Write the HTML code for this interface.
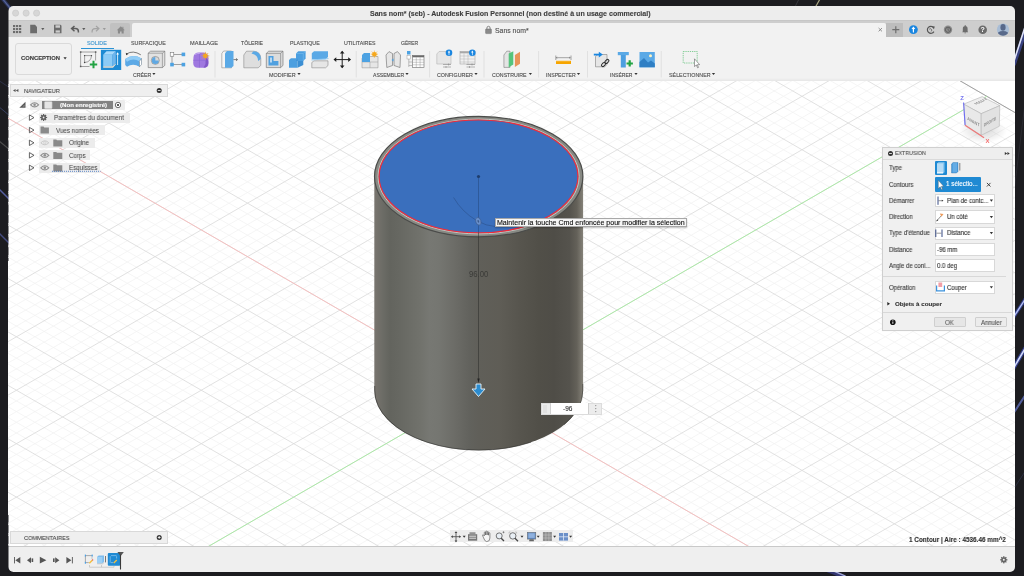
<!DOCTYPE html>
<html><head><meta charset="utf-8">
<style>
*{margin:0;padding:0;box-sizing:border-box}
html,body{width:1024px;height:576px;overflow:hidden;background:#1c1c20;font-family:"Liberation Sans",sans-serif;position:relative}
.a{position:absolute}
svg{will-change:transform}
.t{position:absolute;white-space:nowrap;line-height:1;will-change:transform;-webkit-text-stroke:0.12px currentColor}
#win{position:absolute;left:0;top:0;width:1024px;height:576px;clip-path:inset(6px 9px 4px 8.5px round 5px 5px 5px 5px)}
</style></head><body>
<!-- desktop streaks -->
<svg class="a" style="left:0;top:0" width="1024" height="576">
<g stroke-linecap="round" fill="none">
<path d="M1 -3 L10 8" stroke="#3a4a8a" stroke-width="3.5" opacity="0.55"/><path d="M1 -3 L10 8" stroke="#7080c0" stroke-width="1.2" opacity="0.6"/>
<path d="M-2 80 L10 88" stroke="#3a3f60" stroke-width="1" opacity="0.6"/>
<path d="M-2 106 L10 116" stroke="#46507a" stroke-width="1" opacity="0.7"/>
<path d="M-2 140 L10 150" stroke="#6a6a6a" stroke-width="1.2" opacity="0.6"/>
<path d="M-2 188 L10 200" stroke="#6470c0" stroke-width="1.5" opacity="0.8"/>
<path d="M-2 232 L10 244" stroke="#5560a8" stroke-width="1.4" opacity="0.7"/>
<path d="M1027 26 L1014 64" stroke="#5060d0" stroke-width="4" opacity="0.55"/>
<path d="M1026 24 L1013 64" stroke="#e8ecff" stroke-width="1.6" opacity="0.95"/>
<path d="M1026 298 L1013 318" stroke="#4050c0" stroke-width="3.5" opacity="0.6"/><path d="M1026 298 L1013 318" stroke="#c0ccff" stroke-width="1.4" opacity="0.9"/>
<path d="M1026 347 L1013 369" stroke="#4050c0" stroke-width="4" opacity="0.65"/><path d="M1026 347 L1013 369" stroke="#d8e0ff" stroke-width="1.6" opacity="0.95"/>
<path d="M1026 394 L1013 414" stroke="#6a7ad0" stroke-width="2" opacity="0.7"/>
<path d="M1026 470 L1013 490" stroke="#3a3f60" stroke-width="1" opacity="0.5"/>
<path d="M820 -1 L815.5 7" stroke="#c9c69a" stroke-width="1.2" opacity="0.8"/>
<path d="M799 -1 L795 7" stroke="#55555a" stroke-width="0.8" opacity="0.6"/>
<path d="M845 576 L829 569" stroke="#b8c0f8" stroke-width="1.6" opacity="0.85"/>
<path d="M843 577 L825 570" stroke="#4a4fc0" stroke-width="2.5" opacity="0.5"/>
<path d="M1026 95 L1013 200" stroke="#3a3a44" stroke-width="0.8" opacity="0.6"/>
</g>

</svg>
<div id="win">
  <div class="a" style="left:0;top:0;width:1024px;height:20px;background:#ededed"></div>
  <div class="a" style="left:0;top:20px;width:1024px;height:17px;background:#cecece;border-top:1px solid #c7c7c7"></div>
  <div class="a" style="left:132.1px;top:22.9px;width:754.1px;height:14.5px;background:#f2f2f2;border-radius:2px 2px 0 0"></div>
  <div class="a" style="left:109.8px;top:22.6px;width:20.2px;height:14.4px;background:#c1c1c1;border-radius:2px 2px 0 0"></div>
  <div class="a" style="left:886.2px;top:22.8px;width:16.5px;height:14.5px;background:#bdbdbd"></div>
  <div class="a" style="left:0;top:37px;width:1024px;height:44px;background:linear-gradient(#f2f2f2 0,#f2f2f2 41px,#e6e6e6 44px)"></div>
  <div class="a" style="left:0;top:81px;width:1024px;height:465px;background:#fff;overflow:hidden">
    <svg class="a" style="left:0;top:-81px" width="1024" height="576">
<path d="M0 744.11L1024 1336.22M0 733.42L1024 1325.53M0 722.73L1024 1314.84M0 712.05L1024 1304.15M0 690.67L1024 1282.78M0 679.98L1024 1272.09M0 669.29L1024 1261.40M0 658.61L1024 1250.71M0 637.23L1024 1229.34M0 626.54L1024 1218.65M0 615.85L1024 1207.96M0 605.17L1024 1197.27M0 583.79L1024 1175.90M0 573.10L1024 1165.21M0 562.41L1024 1154.52M0 551.73L1024 1143.83M0 530.35L1024 1122.46M0 519.66L1024 1111.77M0 508.97L1024 1101.08M0 498.29L1024 1090.39M0 476.91L1024 1069.02M0 466.22L1024 1058.33M0 455.53L1024 1047.64M0 444.85L1024 1036.95M0 423.47L1024 1015.58M0 412.78L1024 1004.89M0 402.09L1024 994.20M0 391.41L1024 983.51M0 370.03L1024 962.14M0 359.34L1024 951.45M0 348.65L1024 940.76M0 337.97L1024 930.07M0 316.59L1024 908.70M0 305.90L1024 898.01M0 295.21L1024 887.32M0 284.53L1024 876.63M0 263.15L1024 855.26M0 252.46L1024 844.57M0 241.77L1024 833.88M0 231.09L1024 823.19M0 209.71L1024 801.82M0 199.02L1024 791.13M0 188.33L1024 780.44M0 177.65L1024 769.75M0 156.27L1024 748.38M0 145.58L1024 737.69M0 134.89L1024 727.00M0 124.21L1024 716.31M0 102.83L1024 694.94M0 92.14L1024 684.25M0 81.45L1024 673.56M0 70.77L1024 662.87M0 49.39L1024 641.50M0 38.70L1024 630.81M0 28.01L1024 620.12M0 17.33L1024 609.43M0 -4.05L1024 588.06M0 -14.74L1024 577.37M0 -25.43L1024 566.68M0 -36.11L1024 555.99M0 -57.49L1024 534.62M0 -68.18L1024 523.93M0 -78.87L1024 513.24M0 -89.55L1024 502.55M0 -110.93L1024 481.18M0 -121.62L1024 470.49M0 -132.31L1024 459.80M0 -142.99L1024 449.11M0 -164.37L1024 427.74M0 -175.06L1024 417.05M0 -185.75L1024 406.36M0 -196.43L1024 395.67M0 -217.81L1024 374.30M0 -228.50L1024 363.61M0 -239.19L1024 352.92M0 -249.87L1024 342.23M0 -271.25L1024 320.86M0 -281.94L1024 310.17M0 -292.63L1024 299.48M0 -303.31L1024 288.79M0 -324.69L1024 267.42M0 -335.38L1024 256.73M0 -346.07L1024 246.04M0 -356.75L1024 235.35M0 -378.13L1024 213.98M0 -388.82L1024 203.29M0 -399.51L1024 192.60M0 -410.19L1024 181.91M0 -431.57L1024 160.54M0 -442.26L1024 149.85M0 -452.95L1024 139.16M0 -463.63L1024 128.47M0 36.35L441.58 -218.99M0 47.04L450.82 -213.64M0 57.73L460.07 -208.30M0 68.41L469.31 -202.95M0 89.79L487.79 -192.27M0 100.48L497.03 -186.92M0 111.17L506.28 -181.58M0 121.85L515.52 -176.23M0 143.23L534.00 -165.55M0 153.92L543.24 -160.20M0 164.61L552.49 -154.86M0 175.29L561.73 -149.51M0 196.67L580.21 -138.83M0 207.36L589.45 -133.48M0 218.05L598.70 -128.14M0 228.73L607.94 -122.79M0 250.11L626.42 -112.11M0 260.80L635.66 -106.76M0 271.49L644.91 -101.42M0 282.17L654.15 -96.07M0 303.55L672.63 -85.39M0 314.24L681.87 -80.04M0 324.93L691.12 -74.70M0 335.61L700.36 -69.35M0 356.99L718.84 -58.67M0 367.68L728.08 -53.32M0 378.37L737.33 -47.98M0 389.05L746.57 -42.63M0 410.43L765.05 -31.95M0 421.12L774.29 -26.60M0 431.81L783.54 -21.26M0 442.49L792.78 -15.91M0 463.87L811.26 -5.23M0 474.56L820.50 0.12M0 485.25L829.75 5.46M0 495.93L838.99 10.81M0 517.31L857.47 21.49M0 528.00L866.71 26.84M0 538.69L875.96 32.18M0 549.37L885.20 37.53M0 570.75L903.68 48.21M0 581.44L912.92 53.56M0 592.13L922.17 58.90M0 602.81L931.41 64.25M0 624.19L949.89 74.93M0 634.88L959.13 80.28M0 645.57L968.38 85.62M0 656.25L977.62 90.97M0 677.63L996.10 101.65M0 688.32L1005.34 107.00M0 699.01L1014.59 112.34M0 709.69L1023.83 117.69M0 731.07L1024.00 138.96M0 741.76L1024.00 149.65M0 752.45L1024.00 160.34M0 763.13L1024.00 171.03M0 784.51L1024.00 192.40M0 795.20L1024.00 203.09M0 805.89L1024.00 213.78M0 816.57L1024.00 224.47M0 837.95L1024.00 245.84M0 848.64L1024.00 256.53M0 859.33L1024.00 267.22M0 870.01L1024.00 277.91M0 891.39L1024.00 299.28M0 902.08L1024.00 309.97M0 912.77L1024.00 320.66M0 923.45L1024.00 331.35M0 944.83L1024.00 352.72M0 955.52L1024.00 363.41M0 966.21L1024.00 374.10M0 976.89L1024.00 384.79M0 998.27L1024.00 406.16M0 1008.96L1024.00 416.85M0 1019.65L1024.00 427.54M0 1030.33L1024.00 438.23M0 1051.71L1024.00 459.60M0 1062.40L1024.00 470.29M0 1073.09L1024.00 480.98M0 1083.77L1024.00 491.67M0 1105.15L1024.00 513.04M0 1115.84L1024.00 523.73M0 1126.53L1024.00 534.42M0 1137.21L1024.00 545.11M0 1158.59L1024.00 566.48M0 1169.28L1024.00 577.17M0 1179.97L1024.00 587.86M0 1190.65L1024.00 598.55M0 1212.03L1024.00 619.92M0 1222.72L1024.00 630.61M0 1233.41L1024.00 641.30M0 1244.09L1024.00 651.99M0 1265.47L1024.00 673.36M0 1276.16L1024.00 684.05M0 1286.85L1024.00 694.74M0 1297.53L1024.00 705.43" stroke="#f2f2f2" stroke-width="0.8" fill="none"/>
<path d="M0 754.80L1024 1346.91M0 701.36L1024 1293.47M0 647.92L1024 1240.03M0 594.48L1024 1186.59M0 541.04L1024 1133.15M0 487.60L1024 1079.71M0 434.16L1024 1026.27M0 380.72L1024 972.83M0 327.28L1024 919.39M0 273.84L1024 865.95M0 220.40L1024 812.51M0 166.96L1024 759.07M0 113.52L1024 705.63M0 60.08L1024 652.19M0 6.64L1024 598.75M0 -46.80L1024 545.31M0 -100.24L1024 491.87M0 -153.68L1024 438.43M0 -207.12L1024 384.99M0 -260.56L1024 331.55M0 -314.00L1024 278.11M0 -367.44L1024 224.67M0 -420.88L1024 171.23M0 -474.32L1024 117.79M0 25.66L432.34 -224.33M0 79.10L478.55 -197.61M0 132.54L524.76 -170.89M0 185.98L570.97 -144.17M0 239.42L617.18 -117.45M0 292.86L663.39 -90.73M0 346.30L709.60 -64.01M0 399.74L755.81 -37.29M0 453.18L802.02 -10.57M0 506.62L848.23 16.15M0 560.06L894.44 42.87M0 613.50L940.65 69.59M0 666.94L986.86 96.31M0 720.38L1024.00 128.27M0 773.82L1024.00 181.71M0 827.26L1024.00 235.15M0 880.70L1024.00 288.59M0 934.14L1024.00 342.03M0 987.58L1024.00 395.47M0 1041.02L1024.00 448.91M0 1094.46L1024.00 502.35M0 1147.90L1024.00 555.79M0 1201.34L1024.00 609.23M0 1254.78L1024.00 662.67M0 1308.22L1024.00 716.11" stroke="#dbdbdb" stroke-width="0.85" fill="none"/>
<path d="M926.86 61.62 L1024 117.79" stroke="#9a9a9a" stroke-width="0.9" fill="none"/>
<path d="M0 113.52L1024 705.63" stroke="#f7bcbc" stroke-width="0.9" fill="none"/>
<path d="M0 666.94L986.8599999999999 96.31" stroke="#a6eaa0" stroke-width="0.9" fill="none"/>
<defs>
<linearGradient id="body" x1="374.3" x2="583.1" y1="0" y2="0" gradientUnits="userSpaceOnUse">
<stop offset="0" stop-color="#7a7670"/>
<stop offset="0.012" stop-color="#75726c"/>
<stop offset="0.04" stop-color="#6c6c66"/>
<stop offset="0.075" stop-color="#63645e"/>
<stop offset="0.123" stop-color="#676862"/>
<stop offset="0.22" stop-color="#71726c"/>
<stop offset="0.265" stop-color="#777873"/>
<stop offset="0.31" stop-color="#757671"/>
<stop offset="0.385" stop-color="#6c6c67"/>
<stop offset="0.455" stop-color="#62625d"/>
<stop offset="0.5" stop-color="#605f59"/>
<stop offset="0.6" stop-color="#5f5d56"/>
<stop offset="0.695" stop-color="#57554e"/>
<stop offset="0.79" stop-color="#514f48"/>
<stop offset="0.86" stop-color="#4f4d47"/>
<stop offset="0.935" stop-color="#55534d"/>
<stop offset="0.97" stop-color="#646159"/>
<stop offset="0.99" stop-color="#7a776e"/>
<stop offset="1" stop-color="#858279"/>
</linearGradient>
</defs>
<path d="M374.3 176.6 L374.3 390.3 A104.4 60.1 0 0 0 583.1 390.3 L583.1 176.6 Z" fill="url(#body)"/>
<path d="M374.7 386 L374.7 390.3 A104.3 59.8 0 0 0 531.2 442.1" fill="none" stroke="#2e2e2b" stroke-width="0.8" opacity="0.75"/>
<path d="M582.8 384 L582.8 390.3 A104.1 59.8 0 0 1 564 424.6" fill="none" stroke="#2e2e2b" stroke-width="0.8" opacity="0.7"/>
<ellipse cx="478.7" cy="176.6" rx="104.2" ry="60.2" fill="#878983" stroke="#4b4c4a" stroke-width="1.2"/>
<ellipse cx="478.6" cy="176.5" rx="100.6" ry="57.4" fill="none" stroke="#c4c6c2" stroke-width="1"/>
<ellipse cx="478.5" cy="176.4" rx="99.4" ry="56.4" fill="#3a6fbd" stroke="#f22a3a" stroke-width="1.1"/>
<path d="M478.5 176.5 L478.5 233" stroke="#1a3560" stroke-width="0.6" fill="none" opacity="0.6"/><path d="M478.5 233 L478.5 381" stroke="#2a2a28" stroke-width="0.65" fill="none" opacity="0.8"/>
<path d="M477.3 378.5 L478.5 383 L479.7 378.5 Z" fill="#222"/>
<circle cx="478.5" cy="176.5" r="1.6" fill="#1f3e6e"/>
<path d="M453.6 197.5 Q462 212 476.7 220.6 Q486 226 496 226.7" stroke="#23406e" stroke-width="0.55" fill="none" opacity="0.7"/>
<ellipse cx="478.3" cy="221.3" rx="2.6" ry="3.9" transform="rotate(-18 478.3 221.3)" fill="#6990cc" stroke="#3b5a8c" stroke-width="0.6"/><ellipse cx="478.3" cy="221.3" rx="0.8" ry="1.4" transform="rotate(-18 478.3 221.3)" fill="#3b5a8c"/>
<path d="M476 384 L481 384 L481 389 L485 389 L478.5 396.5 L472 389 L476 389 Z" fill="#2c8ccf" stroke="#e8f4fb" stroke-width="0.9"/>
<text x="0" y="0" transform="translate(478.6 276.5) scale(0.9 1)" font-family="Liberation Sans" font-size="8.6" fill="#3b3b38" text-anchor="middle">96.00</text>
<defs><radialGradient id="csh" cx="0.5" cy="0.5" r="0.5"><stop offset="0" stop-color="#000" stop-opacity="0.16"/><stop offset="1" stop-color="#000" stop-opacity="0"/></radialGradient></defs>
<ellipse cx="983" cy="131" rx="24" ry="12" fill="url(#csh)"/>
<path d="M982.2 96.6 L999.8 105.6 L981.2 113.7 L963.6 104.1 Z" fill="#efefef" stroke="#a9a9a9" stroke-width="0.5"/>
<path d="M963.6 104.1 L981.2 113.7 L981.2 135.3 L965.1 125.3 Z" fill="#e9e9e9" stroke="#a9a9a9" stroke-width="0.5"/>
<path d="M981.2 113.7 L999.8 105.6 L999.3 126.3 L981.2 135.3 Z" fill="#e2e2e2" stroke="#a9a9a9" stroke-width="0.5"/>
<text transform="matrix(0.62 -0.28 0.5 0.28 976 104.8)" font-family="Liberation Sans" font-weight="700" font-size="7" fill="#8d8d8d">HAUT</text>
<text transform="matrix(0.82 0.46 0 1 967.2 119.8)" font-family="Liberation Sans" font-weight="700" font-size="4.6" fill="#8d8d8d">AVANT</text>
<text transform="matrix(0.72 -0.4 0 1 983.8 126.8)" font-family="Liberation Sans" font-weight="700" font-size="4.6" fill="#8d8d8d">DROITE</text>
<path d="M963.6 102.5 L965.1 125.3" stroke="#6f6ff2" stroke-width="1.1"/>
<path d="M965.1 125.3 L984 137.7" stroke="#f07878" stroke-width="1.1"/>
<text x="962" y="99.5" font-family="Liberation Sans" font-weight="700" font-size="6" fill="#7474ef" text-anchor="middle">Z</text>
<text x="987.5" y="143.3" font-family="Liberation Sans" font-weight="700" font-size="6" fill="#f46c6c" text-anchor="middle">X</text>

    </svg>
  </div>
  <div class="a" style="left:0;top:546px;width:1024px;height:30px;background:#efefef;border-top:1px solid #c9c9c9"></div>
<!-- title bar -->
<svg class="a" style="left:0;top:0" width="1024" height="40">
 <g fill="#d6d6d6" stroke="#c6c6c6" stroke-width="0.6">
  <circle cx="15.6" cy="13.1" r="3.1"/><circle cx="26.1" cy="13.1" r="3.1"/><circle cx="36.6" cy="13.1" r="3.1"/>
 </g>
 <!-- grid icon -->
 <g fill="#6c6c6c">
  <rect x="13" y="25" width="2.2" height="2.1"/><rect x="16" y="25" width="2.2" height="2.1"/><rect x="19" y="25" width="2.2" height="2.1"/>
  <rect x="13" y="28" width="2.2" height="2.1"/><rect x="16" y="28" width="2.2" height="2.1"/><rect x="19" y="28" width="2.2" height="2.1"/>
  <rect x="13" y="31" width="2.2" height="2.1"/><rect x="16" y="31" width="2.2" height="2.1"/><rect x="19" y="31" width="2.2" height="2.1"/>
 </g>
 <!-- file -->
 <path d="M30.2 24.8 L35 24.8 L37 27 L37 33.2 L30.2 33.2 Z" fill="#6c6c6c"/>
 <path d="M41.2 28.1 L44.4 28.1 L42.8 30.3 Z" fill="#5c5c5c"/>
 <!-- save -->
 <path d="M54 24.8 L60.5 24.8 L61.5 25.8 L61.5 33.2 L54 33.2 Z" fill="#6c6c6c"/>
 <rect x="55.5" y="25.3" width="4.5" height="2.4" fill="#cdcdcd"/>
 <rect x="55.6" y="30.4" width="4.3" height="2.2" fill="#cdcdcd"/>
 <!-- undo -->
 <path d="M74.5 26 L71.6 28.6 L74.5 31.2 M71.8 28.6 L75.5 28.6 Q78.4 28.6 78.4 31.5 L78.4 32.5" fill="none" stroke="#5c5c5c" stroke-width="1.5"/>
 <path d="M82.2 28.1 L85.4 28.1 L83.8 30.3 Z" fill="#5c5c5c"/>
 <!-- redo -->
 <path d="M96 26 L98.9 28.6 L96 31.2 M98.7 28.6 L95 28.6 Q92.1 28.6 92.1 31.5 L92.1 32.5" fill="none" stroke="#a3a3a3" stroke-width="1.2"/>
 <path d="M102.7 28.1 L105.9 28.1 L104.3 30.3 Z" fill="#9a9a9a"/>
 <!-- home -->
 <path d="M116.8 30.2 L120.8 26.3 L124.8 30.2 L123.7 30.2 L123.7 33.6 L121.6 33.6 L121.6 31.6 L120 31.6 L120 33.6 L117.9 33.6 L117.9 30.2 Z" fill="#8a8a8a"/><rect x="122.4" y="26.8" width="1" height="2" fill="#8a8a8a"/>
 <!-- tab: lock -->
 <path d="M486.9 29.2 L486.9 28 Q486.9 26.3 488.5 26.3 Q490.1 26.3 490.1 28 L490.1 29.2" fill="none" stroke="#7a7a7a" stroke-width="0.9"/>
 <rect x="485.6" y="29" width="5.8" height="4.6" rx="0.6" fill="#8a8a8a" stroke="#6e6e6e" stroke-width="0.5"/>
 <!-- x close -->
 <path d="M878.6 28 L882 31.4 M882 28 L878.6 31.4" stroke="#7a7a7a" stroke-width="0.8"/>
 <!-- plus -->
 <path d="M895.8 26.2 L895.8 33.2 M892.3 29.7 L899.3 29.7" stroke="#6e6e6e" stroke-width="1.2"/>
 <!-- blue upgrade -->
 <circle cx="913.4" cy="29.6" r="4.4" fill="#1a86e0"/>
 <path d="M913.4 26.4 L915.3 28.9 L914.1 28.9 L913.9 32.6 L912.9 32.6 L912.7 28.9 L911.5 28.9 Z" fill="#fff"/>
 <!-- sync -->
 <path d="M933.6 27.6 A3.5 3.5 0 1 0 933.9 31.6" fill="none" stroke="#555" stroke-width="1.2"/>
 <path d="M931.6 26.2 L934.8 26.4 L933.9 29.3 Z" fill="#555"/>
 <path d="M929.2 29.2 Q930.5 28 931.5 29.5 Q932.3 30.8 930.8 31.5" fill="none" stroke="#555" stroke-width="0.8"/>
 <!-- clock -->
 <circle cx="948" cy="29.8" r="4.2" fill="#8a8a8a"/>
 <circle cx="948" cy="29.8" r="2.6" fill="none" stroke="#5a5a5a" stroke-width="0.9"/>
 <path d="M948 28.2 L948 29.9 L949.3 30.6" fill="none" stroke="#5a5a5a" stroke-width="0.7"/>
 <!-- bell -->
 <path d="M962.3 32.2 L962.8 31.3 L962.8 28.8 Q962.8 26 965.2 26 Q967.6 26 967.6 28.8 L967.6 31.3 L968.1 32.2 Z" fill="#6c6c6c"/>
 <circle cx="965.2" cy="25.6" r="0.6" fill="#6c6c6c"/>
 <rect x="964.4" y="32.4" width="1.6" height="0.9" rx="0.4" fill="#6c6c6c"/>
 <!-- help -->
 <circle cx="982.7" cy="29.7" r="4.3" fill="#6c6c6c"/>
 <text x="982.7" y="32.4" font-family="Liberation Sans" font-weight="700" font-size="7" fill="#fff" text-anchor="middle">?</text>
 <!-- avatar -->
 <circle cx="1003" cy="29.6" r="6.1" fill="#a8bdd6"/>
 <clipPath id="avc"><circle cx="1003" cy="29.6" r="6.1"/></clipPath>
 <g clip-path="url(#avc)" fill="#58698a">
  <ellipse cx="1003" cy="27.4" rx="2.6" ry="3.3"/>
  <path d="M996.5 36.5 Q997 31 1003 31 Q1009 31 1009.5 36.5 Z"/>
 </g>
</svg>
<div class="t" style="left:370.3px;top:9.5px;font-size:7.06px;font-weight:700;color:#3d3d3d">Sans nom* (seb) - Autodesk Fusion Personnel (non destiné à un usage commercial)</div>
<div class="t" style="left:494.5px;top:28.2px;font-size:6.89px;color:#505050">Sans nom*</div>
<!-- toolbar -->
<div class="a" style="left:15px;top:43px;width:56.5px;height:31.5px;border:1px solid #dadada;border-radius:3px;background:#f1f1f1"></div>
<div class="t" style="left:21px;top:56.1px;font-size:5.85px;font-weight:700;color:#3a3a3a">CONCEPTION</div>
<div class="a" style="left:81px;top:47.6px;width:32.5px;height:1.6px;background:#2b93d5"></div>
<div class="t" style="left:86.8px;top:41px;font-size:5.43px;color:#3b95cf">SOLIDE</div>
<div class="t" style="left:130.6px;top:41px;font-size:5.35px;color:#4f4f4f">SURFACIQUE</div>
<div class="t" style="left:189.5px;top:41px;font-size:5.62px;color:#4f4f4f">MAILLAGE</div>
<div class="t" style="left:241.25px;top:41px;font-size:5.16px;color:#4f4f4f">TÔLERIE</div>
<div class="t" style="left:290px;top:41px;font-size:5.31px;color:#4f4f4f">PLASTIQUE</div>
<div class="t" style="left:344px;top:41px;font-size:5.25px;color:#4f4f4f">UTILITAIRES</div>
<div class="t" style="left:401px;top:41px;font-size:5.1px;color:#4f4f4f;transform:scaleX(0.94);transform-origin:0 0">GÉRER</div>
<div class="t" style="left:133px;top:72.8px;font-size:5.26px;color:#4f4f4f">CRÉER</div>
<div class="t" style="left:269px;top:72.8px;font-size:5.44px;color:#4f4f4f">MODIFIER</div>
<div class="t" style="left:373.3px;top:72.8px;font-size:5.10px;color:#4f4f4f">ASSEMBLER</div>
<div class="t" style="left:436.9px;top:72.8px;font-size:5.34px;color:#4f4f4f">CONFIGURER</div>
<div class="t" style="left:491.7px;top:72.8px;font-size:5.24px;color:#4f4f4f">CONSTRUIRE</div>
<div class="t" style="left:546px;top:72.8px;font-size:5.19px;color:#4f4f4f">INSPECTER</div>
<div class="t" style="left:610.4px;top:72.8px;font-size:5.06px;color:#4f4f4f">INSÉRER</div>
<div class="t" style="left:668.8px;top:72.8px;font-size:5.35px;color:#4f4f4f">SÉLECTIONNER</div>
<svg class="a" style="left:0;top:36px" width="1024" height="46">
 <g transform="translate(0,-36)">
 <!-- carets -->
 <g fill="#333">
  <path d="M63.50 57.30 L66.70 57.30 L65.10 59.50 Z"/>
  <path d="M152.30 72.9 L155.50 72.9 L153.90 75.1 Z"/>
  <path d="M297.40 72.9 L300.60 72.9 L299.00 75.1 Z"/>
  <path d="M405.40 72.9 L408.60 72.9 L407.00 75.1 Z"/>
  <path d="M474.40 72.9 L477.60 72.9 L476.00 75.1 Z"/>
  <path d="M528.80 72.9 L532.00 72.9 L530.40 75.1 Z"/>
  <path d="M576.90 72.9 L580.10 72.9 L578.50 75.1 Z"/>
  <path d="M634.40 72.9 L637.60 72.9 L636.00 75.1 Z"/>
  <path d="M711.90 72.9 L715.10 72.9 L713.50 75.1 Z"/>
 </g>
 <!-- separators -->
 <g fill="#dcdcdc">
  <rect x="214.6" y="51" width="0.8" height="26.5"/>
  <rect x="355.8" y="51" width="0.8" height="26.5"/>
  <rect x="429.3" y="51" width="0.8" height="26.5"/>
  <rect x="483.6" y="51" width="0.8" height="26.5"/>
  <rect x="538.3" y="51" width="0.8" height="26.5"/>
  <rect x="587.2" y="51" width="0.8" height="26.5"/>
  <rect x="660.8" y="51" width="0.8" height="26.5"/>
 </g>
 <!-- sketch icon -->
 <path d="M80.6 52 L95.6 52 L95.6 60.5 M80.6 52 L80.6 66.5 L89.5 66.5" fill="none" stroke="#8a8a8a" stroke-width="0.8"/>
 <g fill="#5a5a5a"><rect x="79.9" y="51.3" width="1.5" height="1.5"/><rect x="94.9" y="51.3" width="1.5" height="1.5"/><rect x="79.9" y="65.7" width="1.5" height="1.5"/></g>
 <path d="M84.6 55.6 L91.5 55.6 Q91 62 84.6 62.5 Z" fill="none" stroke="#5a5a5a" stroke-width="0.55"/>
 <g fill="#444"><circle cx="84.6" cy="55.6" r="0.7"/><circle cx="91.5" cy="55.6" r="0.7"/><circle cx="84.6" cy="62.5" r="0.7"/></g>
 <path d="M89.8 63.5 L92.5 63.5 L92.5 60.8 L94.5 60.8 L94.5 63.5 L97.2 63.5 L97.2 65.5 L94.5 65.5 L94.5 68.2 L92.5 68.2 L92.5 65.5 L89.8 65.5 Z" fill="#23a344"/>
 <!-- extrude selected -->
 <rect x="100.9" y="49.8" width="20.3" height="20.2" fill="#1e8ad3"/>
 <path d="M103.2 54.8 L106.5 51.3 L115.8 51.3 L112.5 54.8 Z" fill="#a9d9fb"/>
 <path d="M103.2 54.8 L112.5 54.8 L112.5 66.3 L103.2 66.3 Z" fill="#8ccbf6"/>
 <path d="M112.5 54.8 L115.8 51.3 L115.8 63.2 L112.5 66.3 Z" fill="#6fb5ec"/>
 <path d="M103.2 66.3 L112.5 66.3 L115.8 63.6 L115.8 64.6 L113 67.8 L103.2 67.8 Z" fill="#eadfd2"/>
 <path d="M117.6 65 L117.6 53.5" stroke="#fff" stroke-width="0.8" fill="none"/>
 <path d="M116.2 54.6 L117.6 52.2 L119 54.6 Z" fill="#fff"/>
 <!-- revolve -->
 <path d="M125.2 59 Q133 53.5 141.5 58.5 L141.5 64.5 L139.5 66.8 Q133 62.8 127 66.8 L125.2 65 Z" fill="#5ca9e6"/>
 <path d="M125.2 59 Q133 53.5 141.5 58.5 L139.5 61.2 Q133 57.5 127 61.8 Z" fill="#90ccf6"/>
 <path d="M139.5 61.2 L141.5 58.5 L141.5 64.5 L139.5 66.8 Z" fill="#fff" stroke="#555" stroke-width="0.35"/>
 <path d="M126.5 54 Q133 49.8 140.8 54.8" fill="none" stroke="#444" stroke-width="0.7"/>
 <path d="M125.8 52.7 L126.2 55.2 L128.3 53.9 Z" fill="#333"/>
 <!-- hole -->
 <path d="M148.2 53.2 L150.6 51.2 L164.8 51.2 L164.8 65.4 L162.4 67.6 L148.2 67.6 Z" fill="#e2e2e2" stroke="#6a6a6a" stroke-width="0.6"/>
 <path d="M148.2 53.2 L162.4 53.2 L164.8 51.2 M162.4 53.2 L162.4 67.6" fill="none" stroke="#6a6a6a" stroke-width="0.5"/>
 <circle cx="155.3" cy="60.4" r="4" fill="#d8d8d8" stroke="#6a6a6a" stroke-width="0.5"/>
 <path d="M155.3 56.9 A3.5 3.5 0 1 0 158.8 60.4 L155.3 60.4 Z" fill="#5fa8e3"/>
 <!-- pattern -->
 <path d="M172 54.5 L183.5 54.5 M172 54.5 L172 64.5 L183.5 64.5" stroke="#6a6a6a" stroke-width="0.6" fill="none"/>
 <rect x="170.2" y="52.6" width="3.6" height="3.6" fill="#fff" stroke="#666" stroke-width="0.5"/>
 <rect x="181.6" y="52.6" width="3.6" height="3.6" fill="#4da2e2"/>
 <rect x="170.2" y="62.8" width="3.6" height="3.6" fill="#4da2e2"/>
 <rect x="181.6" y="62.8" width="3.6" height="3.6" fill="#4da2e2"/>
 <!-- form -->
 <path d="M193.5 57 Q194 52.6 199 52.5 L203.5 52.5 Q208.5 53 208.5 58 L208.5 63.5 Q208.5 67.8 203.5 67.8 L198 67.8 Q193.2 67.5 193.2 63 Z" fill="#9f78e0"/>
 <path d="M205.5 58 Q208.5 58.5 208.3 63 Q208 67.5 203.5 67.8 L205.5 64 Z" fill="#8258c8"/>
 <path d="M193.3 60.3 L205 60.3 M199.5 53 L199.5 67.5" stroke="#8c64d2" stroke-width="0.6"/>
 <path d="M195 54.5 Q197 53.3 200 53.3" stroke="#c9b2f2" stroke-width="0.8" fill="none"/>
 <circle cx="205.4" cy="55.8" r="2.2" fill="#f6a81d"/>
 <path d="M205.4 51.9 L205.4 59.7 M201.5 55.8 L209.3 55.8 M202.6 53 L208.2 58.6 M208.2 53 L202.6 58.6" stroke="#f6a81d" stroke-width="0.7"/>
 <!-- press pull -->
 <path d="M221.8 53.5 L223.6 51 L231.5 51 L231.5 67.8 L221.8 67.8 Z" fill="#f5f5f5" stroke="#777" stroke-width="0.5"/>
 <path d="M225 53.2 L227 51 L233.5 51 L233.5 66 L231.3 67.8 L225 67.8 Z" fill="#5aa9e6"/>
 <path d="M233.5 59.6 L237.3 59.6 M236 58.4 L237.5 59.6 L236 60.8" stroke="#333" stroke-width="0.6" fill="none"/>
 <!-- fillet -->
 <path d="M243.8 55 L246.5 51.2 L253.5 51.2 Q260.8 51.5 260.8 59 L260.8 65.4 L258.2 67.8 L243.8 67.8 Z" fill="#dedede" stroke="#777" stroke-width="0.5"/>
 <path d="M253.5 51.2 Q260.8 51.5 260.8 59 L258.2 61 Q258 55 251.5 53.6 Z" fill="#5aa9e6"/>
 <!-- shell -->
 <path d="M266.3 53.4 L268.7 51.2 L283 51.2 L283 65.4 L280.6 67.6 L266.3 67.6 Z" fill="#dcdcdc" stroke="#6a6a6a" stroke-width="0.6"/>
 <path d="M266.3 53.4 L280.6 53.4 L283 51.2 M280.6 53.4 L280.6 67.6" fill="none" stroke="#6a6a6a" stroke-width="0.5"/>
 <path d="M268.5 56 L273.5 56 L273.5 61 L278.4 61 L278.4 65.5 L268.5 65.5 Z" fill="#4fa0e0"/>
 <rect x="270" y="57.5" width="2" height="5" fill="#fff" opacity="0.6"/>
 <!-- combine -->
 <path d="M289 60 L291 58.3 L297.5 58.3 L297.5 67.8 L289 67.8 Z" fill="#4c9fe0"/>
 <path d="M296 53.5 L298.3 51.2 L305.6 51.2 L305.6 58.5 L303.3 61 L296 61 Z" fill="#4c9fe0"/>
 <path d="M297.5 58.3 L296 61 L303.3 61 L303.3 65 L297.5 67.8 Z" fill="#3c8fd3"/>
 <path d="M296 53.5 L303.3 53.5 L305.6 51.2 M303.3 53.5 L303.3 61" stroke="#7fc0ef" stroke-width="0.5" fill="none"/>
 <!-- split -->
 <path d="M311.8 62.5 L314 60.8 L328 60.8 L328 65.5 L325.6 67.8 L311.8 67.8 Z" fill="#e6e6e6" stroke="#777" stroke-width="0.5"/>
 <path d="M311.8 53.2 L314 51.2 L328 51.2 L328 57 L325.6 59.3 L311.8 59.3 Z" fill="#5aa9e6"/>
 <path d="M311.5 60 L328.5 58.6" stroke="#8cc6ee" stroke-width="0.9"/>
 <!-- move -->
 <path d="M342.2 51.5 L342.2 67.6 M334.2 59.6 L350.3 59.6" stroke="#1d1d1d" stroke-width="1"/>
 <path d="M342.2 50.8 L344.5 53.6 L339.9 53.6 Z M342.2 68.3 L344.5 65.5 L339.9 65.5 Z M333.5 59.6 L336.3 57.3 L336.3 61.9 Z M351 59.6 L348.2 57.3 L348.2 61.9 Z" fill="#1d1d1d"/>
 <!-- assemble new component -->
 <path d="M362 58.5 L364 56.5 L378 56.5 L378 67.8 L362 67.8 Z" fill="#e6e6e6" stroke="#888" stroke-width="0.5"/>
 <path d="M370 62 L378 62 M370 62 L370 67.8 M362 62 L370 62" stroke="#999" stroke-width="0.5"/>
 <path d="M362 55 L364 53 L370 53 L370 62 L362 62 Z" fill="#4da2e2"/>
 <circle cx="374.4" cy="54.2" r="2.3" fill="#f6a81d"/>
 <path d="M374.4 50.6 L374.4 57.8 M370.8 54.2 L378 54.2 M371.8 51.6 L377 56.8 M377 51.6 L371.8 56.8" stroke="#f6a81d" stroke-width="0.6"/>
 <!-- joint -->
 <path d="M386 55 L389 51.6 L392.5 53.5 L392.5 65.5 L386.8 67.5 Z" fill="#e6e6e6" stroke="#6a6a6a" stroke-width="0.6"/>
 <path d="M394 53.5 L397.5 51.6 L400.5 55 L400 67.5 L394 65.5 Z" fill="#e6e6e6" stroke="#6a6a6a" stroke-width="0.6"/>
 <path d="M391.5 60 L393.5 58.5 L393.5 61.5 Z" fill="#4da2e2"/>
 <!-- table -->
 <rect x="407" y="51" width="3.5" height="3.5" fill="#4da2e2"/>
 <rect x="407" y="55.5" width="3.5" height="3.5" fill="#fff" stroke="#888" stroke-width="0.4"/>
 <path d="M408.8 59 L408.8 67 M408.8 62 L412 62 M408.8 65.5 L412 65.5" stroke="#888" stroke-width="0.5"/>
 <rect x="412.5" y="55.5" width="11.5" height="12" fill="#fff" stroke="#6a6a6a" stroke-width="0.6"/>
 <rect x="412.5" y="55.5" width="11.5" height="1.8" fill="#6a6a6a"/>
 <path d="M412.5 59.8 L424 59.8 M412.5 62.3 L424 62.3 M412.5 64.8 L424 64.8 M416.3 57.3 L416.3 67.5 M420.1 57.3 L420.1 67.5" stroke="#888" stroke-width="0.4"/>
 <!-- configure 1 -->
 <path d="M436.8 54 L439 51.5 L451 51.5 L451 64 L436.8 64 Z" fill="#e6e6e6" stroke="#aaa" stroke-width="0.5"/>
 <circle cx="449" cy="52.8" r="3.3" fill="#1a86e0"/>
 <path d="M449 50.6 L450.2 52.5 L449.4 52.5 L449.3 55.2 L448.7 55.2 L448.6 52.5 L447.8 52.5 Z" fill="#fff"/>
 <path d="M443 64.5 L451 64.5 M443 67 L451 67 M448.6 63.5 L448.6 65.5 M446 66 L446 68" stroke="#888" stroke-width="0.6"/>
 <!-- configure 2 -->
 <rect x="460" y="51.5" width="15" height="12.5" fill="#f1f1f1" stroke="#999" stroke-width="0.5"/>
 <rect x="460" y="51.5" width="15" height="1.8" fill="#a8a8a8"/>
 <path d="M460 56 L475 56 M460 59 L475 59 M460 62 L475 62 M464 53.3 L464 64 M468 53.3 L468 64" stroke="#aaa" stroke-width="0.4"/>
 <circle cx="472.3" cy="52.8" r="3.3" fill="#1a86e0"/>
 <path d="M472.3 50.6 L473.5 52.5 L472.7 52.5 L472.6 55.2 L472 55.2 L471.9 52.5 L471.1 52.5 Z" fill="#fff"/>
 <path d="M466.5 64.5 L475 64.5 M466.5 67 L475 67 M472 63.5 L472 65.5 M469.5 66 L469.5 68" stroke="#888" stroke-width="0.6"/>
 <!-- construct -->
 <path d="M503.9 55 L506.8 51.2 L510 51.2 L510 67.4 L503.9 67.4 Z" fill="#e4e4e4" stroke="#666" stroke-width="0.5"/>
 <path d="M508.7 53.6 L513.3 51.2 L513.3 64.5 L508.7 67.4 Z" fill="#55c47c"/>
 <path d="M514.9 55 L520 51.8 L520 63.8 L514.9 67 Z" fill="#e8945a"/>
 <!-- inspect -->
 <path d="M555.8 55.5 L555.8 60 M571 55.5 L571 60 M556.5 57.7 L570.3 57.7" stroke="#555" stroke-width="0.5"/>
 <path d="M557.3 57 L556 57.7 L557.3 58.4 M569 57 L570.3 57.7 L569 58.4" stroke="#555" stroke-width="0.4" fill="none"/>
 <rect x="556" y="60.8" width="15" height="3.2" fill="#f6a500"/>
 <path d="M557 61.3 L557 62 M559 61.3 L559 62 M561 61.3 L561 62 M563 61.3 L563 62 M565 61.3 L565 62 M567 61.3 L567 62 M569 61.3 L569 62" stroke="#fff" stroke-width="0.4"/>
 <!-- insert derive -->
 <path d="M595.5 56.5 L597.8 54.5 L607 54.5 L607 64.5 L604.7 66.8 L595.5 66.8 Z" fill="#e6e6e6" stroke="#6a6a6a" stroke-width="0.5"/>
 <path d="M593.8 54.6 L599.5 54.6" stroke="#1a86e0" stroke-width="1.8"/>
 <path d="M598.8 51.8 L602.8 54.6 L598.8 57.4 Z" fill="#1a86e0"/>
 <rect x="601.2" y="63.2" width="4.6" height="2.8" rx="1.4" transform="rotate(-45 603.5 64.6)" fill="none" stroke="#2a2a2a" stroke-width="1"/><rect x="604.6" y="60" width="4.6" height="2.8" rx="1.4" transform="rotate(-45 606.9 61.4)" fill="none" stroke="#2a2a2a" stroke-width="1"/>
 <!-- insert mcmaster -->
 <rect x="617.8" y="52" width="11" height="3.2" fill="#5aa9e6"/>
 <rect x="620.8" y="55" width="5" height="12.5" fill="#4c9fe0"/>
 <path d="M626.5 62.4 L628.6 62.4 L628.6 60.3 L630.8 60.3 L630.8 62.4 L632.9 62.4 L632.9 64.5 L630.8 64.5 L630.8 66.6 L628.6 66.6 L628.6 64.5 L626.5 64.5 Z" fill="#23a344"/>
 <!-- insert canvas -->
 <rect x="639.5" y="52" width="15.3" height="15.3" fill="#5aa9e6"/>
 <path d="M639.5 67.3 L639.5 62 L644 58 L648 62.5 L651 60.5 L654.8 63.5 L654.8 67.3 Z" fill="#2f7fc4"/>
 <circle cx="650.5" cy="55.8" r="1.5" fill="#fff4c4"/>
 <!-- select -->
 <rect x="683.2" y="51.5" width="14" height="11.5" fill="none" stroke="#3bb55a" stroke-width="0.6" stroke-dasharray="1.3 0.9"/>
 <path d="M694.5 58.8 L694.5 66.5 L696.3 65 L697.6 67.8 L698.5 67.4 L697.3 64.7 L699.6 64.6 Z" fill="#fff" stroke="#444" stroke-width="0.5"/>
 </g>
</svg>
<!-- tooltip -->
<div class="a" style="left:495.2px;top:217.8px;width:192.1px;height:8.9px;background:#f6f6f6;border:1px solid #a8a8a8;box-shadow:0 1px 1.5px rgba(0,0,0,0.25)"></div>
<div class="t" style="left:497px;top:219px;font-size:7.06px;color:#111">Maintenir la touche Cmd enfoncée pour modifier la sélection</div>
<!-- -96 input -->
<div class="a" style="left:541.1px;top:402.7px;width:60.7px;height:12px;background:#ececec;border:1px solid #dcdcdc"></div>
<div class="a" style="left:549.5px;top:403.3px;width:39.7px;height:10.9px;background:#fff;border-left:1px solid #d0d0d0;border-right:1px solid #d0d0d0"></div>
<div class="t" style="left:562.5px;top:406.3px;font-size:6.5px;color:#333">-96</div>
<!-- view toolbar -->
<div class="a" style="left:450.3px;top:530.2px;width:123.1px;height:12.3px;background:rgba(236,236,236,0.92)"></div>
<!-- status -->
<div class="t" style="left:908.75px;top:537px;font-size:6.4px;font-weight:700;color:#333">1 Contour | Aire : 4536.46 mm^2</div>
<!-- comments -->
<div class="a" style="left:10.3px;top:531px;width:157.6px;height:12.5px;background:#efefef;border:1px solid #d9d9d9"></div>
<div class="t" style="left:23.8px;top:534.6px;font-size:6.0px;transform:scaleX(0.94);transform-origin:0 0;color:#4a4a4a">COMMENTAIRES</div>
<svg class="a" style="left:0;top:80px" width="1024" height="500">
 <g transform="translate(0,-80)">
 <circle cx="159.2" cy="537.4" r="2.5" fill="#333"/>
 <rect x="157.8" y="537" width="2.8" height="0.8" fill="#fff"/>
 <path d="M159.2 535.9 L159.2 538.9" stroke="#fff" stroke-width="0.8"/>
 <!-- input grip / dots -->
 <path d="M544 405 L544 413 M546 405 L546 413" stroke="#cfcfcf" stroke-width="0.6"/>
 <circle cx="595.8" cy="405.6" r="0.55" fill="#777"/><circle cx="595.8" cy="408.6" r="0.55" fill="#777"/><circle cx="595.8" cy="411.6" r="0.55" fill="#777"/>
 <!-- view toolbar icons -->
 <g fill="#666" stroke="none">
  <path d="M456 532 L456 541.5 M451.8 536.7 L460.4 536.7" stroke="#555" stroke-width="0.9"/>
  <path d="M456 531.3 L457.4 533 L454.6 533 Z M456 542.2 L457.4 540.5 L454.6 540.5 Z M451 536.7 L452.8 535.3 L452.8 538.1 Z M461 536.7 L459.2 535.3 L459.2 538.1 Z" fill="#444"/>
  <path d="M462.70 535.8 L465.70 535.8 L464.20 537.8 Z" fill="#333"/>
  <rect x="468" y="534.2" width="9.2" height="6.5" fill="#777"/>
  <rect x="469.2" y="535.7" width="6.8" height="1" fill="#ddd"/>
  <rect x="469.2" y="537.7" width="6.8" height="1" fill="#ddd"/>
  <rect x="469.5" y="532.3" width="6" height="1.6" fill="#888"/>
  <path d="M483.3 537.2 L482.6 535.6 Q482.4 534.8 483.2 534.7 L484.3 536 L484.3 532.6 Q484.3 531.9 485 531.9 Q485.6 531.9 485.6 532.6 L485.6 535 L485.7 531.8 Q485.7 531.1 486.4 531.1 Q487.1 531.1 487.1 531.8 L487.1 535 L487.2 532.3 Q487.2 531.6 487.9 531.6 Q488.5 531.6 488.5 532.3 L488.5 535.2 L488.6 533.4 Q488.6 532.7 489.3 532.7 Q489.9 532.7 489.9 533.4 L489.9 538 Q489.9 541.6 486.7 541.6 Q484.6 541.6 483.3 537.2 Z" fill="#f6f6f6" stroke="#555" stroke-width="0.65"/>
  <circle cx="499.2" cy="535.9" r="3" fill="#e8eef4" stroke="#555" stroke-width="0.8"/>
  <path d="M501.2 538.2 L504 541" stroke="#444" stroke-width="1.3"/>
  <path d="M502.5 532.3 L504.5 532.3 M503.5 531.3 L503.5 533.3" stroke="#444" stroke-width="0.5"/>
  <circle cx="512.8" cy="535.9" r="3.2" fill="#e8eef4" stroke="#555" stroke-width="0.8"/>
  <path d="M515 538.3 L518 541.2" stroke="#444" stroke-width="1.3"/>
  <path d="M509 532 L510.5 532 M509 532 L509 533.5 M516.6 532 L515.1 532 M516.6 532 L516.6 533.5" stroke="#888" stroke-width="0.4"/>
  <path d="M520.50 535.8 L523.50 535.8 L522.00 537.8 Z" fill="#333"/>
  <rect x="527.3" y="532.3" width="8.5" height="6.8" fill="#5f89c2" stroke="#666" stroke-width="0.5"/>
  <rect x="528.4" y="533.3" width="6.3" height="4.6" fill="#8fb1de"/>
  <path d="M529.5 539.2 L533.6 539.2 L534 541.2 L529.1 541.2 Z" fill="#666"/>
  <path d="M536.70 535.8 L539.70 535.8 L538.20 537.8 Z" fill="#333"/>
  <rect x="542.9" y="532" width="9" height="9" fill="#8f8f8f"/>
  <path d="M545.9 532 L545.9 541 M548.9 532 L548.9 541 M542.9 535 L551.9 535 M542.9 538 L551.9 538" stroke="#cfcfcf" stroke-width="0.5"/>
  <path d="M553.10 535.8 L556.10 535.8 L554.60 537.8 Z" fill="#333"/>
  <rect x="559" y="533" width="9" height="7.6" fill="#6a8fc8"/>
  <path d="M563.5 533 L563.5 540.6 M559 536.8 L568 536.8" stroke="#dfe9f6" stroke-width="0.8"/>
  <path d="M569.10 535.8 L572.10 535.8 L570.60 537.8 Z" fill="#333"/>
 </g>
 <!-- timeline controls -->
 <g fill="#555">
  <rect x="14" y="557" width="0.9" height="6.4"/><path d="M20.3 557 L20.3 563.4 L15.3 560.2 Z"/>
  <path d="M27 560.2 L31 557.2 L31 563.2 Z"/><rect x="31.6" y="558.4" width="1.6" height="3.6"/>
  <path d="M39.8 556.8 L46.4 560.2 L39.8 563.6 Z"/>
  <rect x="53" y="558.4" width="1.6" height="3.6"/><path d="M55.2 557.2 L59.4 560.2 L55.2 563.2 Z"/>
  <path d="M66.4 557 L71.4 560.2 L66.4 563.4 Z"/><rect x="71.9" y="557" width="0.9" height="6.4"/>
 </g>
 <!-- timeline items -->
 <path d="M86 555.6 L92 555.6 M86 562.6 L88.8 562.6 M85.4 556 L85.4 562.2" fill="none" stroke="#777" stroke-width="0.6"/>
 <path d="M92 556.5 L92 559" stroke="#999" stroke-width="0.5"/>
 <g fill="#4aa0e6"><rect x="84.8" y="554.6" width="1.2" height="1.9"/><rect x="84.8" y="561.8" width="1.2" height="1.9"/><rect x="91.6" y="554.6" width="1.2" height="1.9"/></g>
 <path d="M89.3 563.2 L92.3 560.2" stroke="#f2c03d" stroke-width="1.4"/>
 <circle cx="92.6" cy="559.9" r="0.7" fill="#e04848"/>
 <path d="M97 557 L98.6 555.5 L104 555.5 L104 561.8 L102.4 563.3 L97 563.3 Z" fill="#7dbcee"/>
 <path d="M97 557 L102.4 557 L102.4 563.3 L97 563.3 Z" fill="#9ed0f5"/>
 <path d="M97.2 563.8 L102.6 563.8 L104.2 562.3" stroke="#aaa" stroke-width="0.5" fill="none"/>
 <path d="M105.5 556 L105.5 562.4" stroke="#444" stroke-width="0.7"/>
 <rect x="107.8" y="552.9" width="12.4" height="12.9" rx="1" fill="#1f8ad3"/>
 <path d="M110.2 556.2 L110.2 562.8 M111 555.6 L116.5 555.6 M111 562.6 L113.3 562.6 M116.6 556.2 L116.6 558.5" fill="none" stroke="#9fd0f5" stroke-width="0.6"/>
 <path d="M113.8 563 L116.8 560" stroke="#f2c03d" stroke-width="1.3"/>
 <path d="M117.4 552.1 L123.8 552.1 L121.2 555.6 L120 555.6 Z" fill="#555"/>
 <path d="M120.5 554.5 L120.5 569.5" stroke="#3a3a3a" stroke-width="1.1"/>
 <path d="M89.5 565 L89.5 567.2 L114 567.2 L114 566 M101.5 565 L101.5 567.2" fill="none" stroke="#b4b4b4" stroke-width="0.6"/>
 <!-- gear -->
 <g fill="#666"><circle cx="1003.8" cy="559.8" r="2.6"/><rect x="1003.15" y="556.20" width="1.3" height="3.60" transform="rotate(0.0 1003.8 559.8)"/><rect x="1003.15" y="556.20" width="1.3" height="3.60" transform="rotate(45.0 1003.8 559.8)"/><rect x="1003.15" y="556.20" width="1.3" height="3.60" transform="rotate(90.0 1003.8 559.8)"/><rect x="1003.15" y="556.20" width="1.3" height="3.60" transform="rotate(135.0 1003.8 559.8)"/><rect x="1003.15" y="556.20" width="1.3" height="3.60" transform="rotate(180.0 1003.8 559.8)"/><rect x="1003.15" y="556.20" width="1.3" height="3.60" transform="rotate(225.0 1003.8 559.8)"/><rect x="1003.15" y="556.20" width="1.3" height="3.60" transform="rotate(270.0 1003.8 559.8)"/><rect x="1003.15" y="556.20" width="1.3" height="3.60" transform="rotate(315.0 1003.8 559.8)"/></g><circle cx="1003.8" cy="559.8" r="1.0" fill="#efefef"/>
 </g>
</svg>
<!-- navigator -->
<div class="a" style="left:10.3px;top:84px;width:157.6px;height:12.7px;background:#efefef;border:1px solid #d9d9d9"></div>
<div class="t" style="left:23.8px;top:87.9px;font-size:6.0px;transform:scaleX(0.94);transform-origin:0 0;color:#4a4a4a">NAVIGATEUR</div>
<div class="a" style="left:29.7px;top:100px;width:95.8px;height:10px;background:#ececec;border-radius:1px"></div>
<div class="a" style="left:42.2px;top:100.8px;width:70.5px;height:8px;background:#838383"></div>
<div class="t" style="left:59.7px;top:102.1px;font-size:6.1px;font-weight:700;color:#fbfbfb">(Non enregistré)</div>
<div class="a" style="left:38.8px;top:112.5px;width:90.9px;height:10px;background:#ececec"></div>
<div class="t" style="left:53.8px;top:115.25px;font-size:6.7px;transform:scaleX(0.93);transform-origin:0 0;-webkit-text-stroke:0.05px currentColor;color:#474747">Paramètres du document</div>
<div class="a" style="left:38.8px;top:125px;width:65.9px;height:10px;background:#ececec"></div>
<div class="t" style="left:56.3px;top:127.75px;font-size:6.7px;transform:scaleX(0.93);transform-origin:0 0;-webkit-text-stroke:0.05px currentColor;color:#474747">Vues nommées</div>
<div class="a" style="left:38.8px;top:137.6px;width:55.9px;height:10px;background:#ececec"></div>
<div class="t" style="left:69.2px;top:140.45px;font-size:6.7px;transform:scaleX(0.93);transform-origin:0 0;-webkit-text-stroke:0.05px currentColor;color:#474747">Origine</div>
<div class="a" style="left:38.8px;top:150.2px;width:51.7px;height:10px;background:#ececec"></div>
<div class="t" style="left:69.2px;top:152.95px;font-size:6.7px;transform:scaleX(0.93);transform-origin:0 0;-webkit-text-stroke:0.05px currentColor;color:#474747">Corps</div>
<div class="a" style="left:38.8px;top:162.7px;width:61.7px;height:10px;background:#ececec"></div>
<div class="t" style="left:69.2px;top:165.45px;font-size:6.7px;transform:scaleX(0.93);transform-origin:0 0;-webkit-text-stroke:0.05px currentColor;color:#474747">Esquisses</div>
<svg class="a" style="left:0;top:80px" width="180" height="100">
 <g transform="translate(0,-80)">
 <path d="M13 90.5 L15.6 89 L15.6 92 Z M15.8 90.5 L18.4 89 L18.4 92 Z" fill="#555"/>
 <circle cx="159.2" cy="90.5" r="2.5" fill="#333"/>
 <rect x="157.8" y="90.1" width="2.8" height="0.8" fill="#fff"/>
 <!-- root -->
 <path d="M19.3 107.8 L25.5 101.8 L25.5 107.8 Z" fill="#5a5a5a"/>
 <path d="M22.6 106.6 L24.5 104.7 L24.5 106.6 Z" fill="#9a9a9a"/>
 <path d="M30.6 104.8 Q34.6 100.6 38.6 104.8 Q34.6 109 30.6 104.8 Z" fill="none" stroke="#8f8f8f" stroke-width="1.1"/>
 <circle cx="34.6" cy="104.8" r="1.3" fill="#8f8f8f"/>
 <rect x="44.5" y="101.4" width="7.6" height="7.3" rx="1" fill="#e4e4e4" stroke="#bdbdbd" stroke-width="0.5"/>
 <circle cx="118" cy="105" r="2.7" fill="#fff" stroke="#333" stroke-width="0.7"/>
 <circle cx="118" cy="105" r="1.1" fill="#333"/>
 <!-- tri arrows -->
 <g fill="none" stroke="#555" stroke-width="0.9" stroke-linejoin="round">
  <path d="M29.4 114.9 L34 117.6 L29.4 120.3 Z"/>
  <path d="M29.4 127.4 L34 130.1 L29.4 132.8 Z"/>
  <path d="M29.4 140.1 L34 142.8 L29.4 145.5 Z"/>
  <path d="M29.4 152.6 L34 155.3 L29.4 158 Z"/>
  <path d="M29.4 165.1 L34 167.8 L29.4 170.5 Z"/>
 </g>
 <!-- gear -->
 <g fill="#5f5f5f"><circle cx="43.6" cy="117.5" r="2.5"/><rect x="42.98" y="114.00" width="1.25" height="3.50" transform="rotate(0.0 43.6 117.5)"/><rect x="42.98" y="114.00" width="1.25" height="3.50" transform="rotate(45.0 43.6 117.5)"/><rect x="42.98" y="114.00" width="1.25" height="3.50" transform="rotate(90.0 43.6 117.5)"/><rect x="42.98" y="114.00" width="1.25" height="3.50" transform="rotate(135.0 43.6 117.5)"/><rect x="42.98" y="114.00" width="1.25" height="3.50" transform="rotate(180.0 43.6 117.5)"/><rect x="42.98" y="114.00" width="1.25" height="3.50" transform="rotate(225.0 43.6 117.5)"/><rect x="42.98" y="114.00" width="1.25" height="3.50" transform="rotate(270.0 43.6 117.5)"/><rect x="42.98" y="114.00" width="1.25" height="3.50" transform="rotate(315.0 43.6 117.5)"/></g><circle cx="43.6" cy="117.5" r="0.9" fill="#ececec"/>
 <!-- folders -->
 <g fill="#8a8a8a">
  <path d="M40.5 126.6 L43.6 126.6 L44.3 127.4 L48.9 127.4 L48.9 133.6 L40.5 133.6 Z"/>
  <path d="M53.3 139.5 L56.3 139.5 L57 140.3 L62.3 140.3 L62.3 146.4 L53.3 146.4 Z"/>
  <path d="M53.3 152 L56.3 152 L57 152.8 L62.3 152.8 L62.3 158.9 L53.3 158.9 Z"/>
  <path d="M53.3 164.5 L56.3 164.5 L57 165.3 L62.3 165.3 L62.3 171.4 L53.3 171.4 Z"/>
 </g>
 <!-- eyes -->
 <path d="M40.8 142.8 Q44.8 138.8 48.8 142.8 Q44.8 146.8 40.8 142.8 Z" fill="none" stroke="#c8c8c8" stroke-width="1"/>
 <circle cx="44.8" cy="142.8" r="1.2" fill="none" stroke="#c8c8c8" stroke-width="0.6"/>
 <g fill="none" stroke="#8f8f8f" stroke-width="1.1">
  <path d="M40.8 155.3 Q44.8 151.1 48.8 155.3 Q44.8 159.5 40.8 155.3 Z"/>
  <path d="M40.8 167.8 Q44.8 163.6 48.8 167.8 Q44.8 172 40.8 167.8 Z"/>
 </g>
 <circle cx="44.8" cy="155.3" r="1.3" fill="#8f8f8f"/>
 <circle cx="44.8" cy="167.8" r="1.3" fill="#8f8f8f"/>
 <path d="M52 171.3 L100.5 171.3" stroke="#3a6fc0" stroke-width="0.8" stroke-dasharray="1 1"/>
 </g>
</svg>
<!-- extrusion panel -->
<div class="a" style="left:882.3px;top:147.3px;width:130.6px;height:184px;background:#f0f0f0;border:1px solid #cfcfcf;box-shadow:0 0 1px rgba(0,0,0,0.08)"></div>
<div class="a" style="left:883.3px;top:148.3px;width:128.6px;height:11.6px;background:#eeeeee;border-bottom:1px solid #dadada"></div>
<div class="t" style="left:895.1px;top:150.9px;font-size:5.9px;color:#555;transform:scaleX(0.9);transform-origin:0 0">EXTRUSION</div>
<div class="t" style="left:889px;top:165.45px;font-size:6.4px;transform:scaleX(0.94);transform-origin:0 0;color:#3d3d3d">Type</div>
<div class="t" style="left:889px;top:181.75px;font-size:6.4px;transform:scaleX(0.94);transform-origin:0 0;color:#3d3d3d">Contours</div>
<div class="t" style="left:889px;top:197.85px;font-size:6.4px;transform:scaleX(0.94);transform-origin:0 0;color:#3d3d3d">Démarrer</div>
<div class="t" style="left:889px;top:214.25px;font-size:6.4px;transform:scaleX(0.94);transform-origin:0 0;color:#3d3d3d">Direction</div>
<div class="t" style="left:888.6px;top:230.35px;font-size:6.4px;transform:scaleX(0.94);transform-origin:0 0;color:#3d3d3d">Type d'étendue</div>
<div class="t" style="left:888.6px;top:246.65px;font-size:6.4px;transform:scaleX(0.94);transform-origin:0 0;color:#3d3d3d">Distance</div>
<div class="t" style="left:888.6px;top:263.25px;font-size:6.4px;transform:scaleX(0.94);transform-origin:0 0;color:#3d3d3d">Angle de coni...</div>
<div class="t" style="left:888.6px;top:284.55px;font-size:6.4px;transform:scaleX(0.94);transform-origin:0 0;color:#3d3d3d">Opération</div>
<div class="t" style="left:895px;top:300.6px;font-size:6.21px;font-weight:700;color:#333">Objets à couper</div>
<!-- type buttons -->
<div class="a" style="left:934.5px;top:160.9px;width:12.1px;height:14.4px;background:#1f8ad3;border-radius:1px"></div>
<!-- contours -->
<div class="a" style="left:934.5px;top:177.1px;width:46.3px;height:14.7px;background:#1f8ad3;border-radius:1px"></div>
<div class="t" style="left:946px;top:181.4px;font-size:6.3px;color:#fff">1 sélectio...</div>
<!-- dropdowns -->
<div class="a" style="left:934.7px;top:193.7px;width:60.7px;height:13.7px;background:#fff;border:1px solid #d8d8d8"></div>
<div class="t" style="left:946.6px;top:197.85px;font-size:6.4px;transform:scaleX(0.94);transform-origin:0 0;color:#333">Plan de contc...</div>
<div class="a" style="left:934.7px;top:210px;width:60.7px;height:13.9px;background:#fff;border:1px solid #d8d8d8"></div>
<div class="t" style="left:946.6px;top:214.25px;font-size:6.4px;transform:scaleX(0.94);transform-origin:0 0;color:#333">Un côté</div>
<div class="a" style="left:934.7px;top:226.5px;width:60.5px;height:13.5px;background:#fff;border:1px solid #d8d8d8"></div>
<div class="t" style="left:946.8px;top:230.35px;font-size:6.4px;transform:scaleX(0.94);transform-origin:0 0;color:#333">Distance</div>
<div class="a" style="left:934.7px;top:242.6px;width:60.5px;height:13.6px;background:#fff;border:1px solid #d8d8d8"></div>
<div class="t" style="left:936.9px;top:246.65px;font-size:6.4px;transform:scaleX(0.94);transform-origin:0 0;color:#333">-96 mm</div>
<div class="a" style="left:934.7px;top:258.9px;width:60.5px;height:13.5px;background:#fff;border:1px solid #d8d8d8"></div>
<div class="t" style="left:936.9px;top:263.25px;font-size:6.4px;transform:scaleX(0.94);transform-origin:0 0;color:#333">0.0 deg</div>
<div class="a" style="left:882.9px;top:276.2px;width:122.8px;height:0.8px;background:#d8d8d8"></div>
<div class="a" style="left:934.7px;top:280.9px;width:60.5px;height:13.2px;background:#fff;border:1px solid #d8d8d8"></div>
<div class="t" style="left:946.8px;top:284.55px;font-size:6.4px;transform:scaleX(0.94);transform-origin:0 0;color:#333">Couper</div>
<div class="a" style="left:883.3px;top:311.8px;width:128.6px;height:0.8px;background:#d8d8d8"></div>
<div class="a" style="left:934.2px;top:317.2px;width:31.6px;height:10.3px;background:#e6e6e6;border:1px solid #cfcfcf;border-radius:1px"></div>
<div class="t" style="left:945.3px;top:319.85px;font-size:6.4px;transform:scaleX(0.94);transform-origin:0 0;color:#666">OK</div>
<div class="a" style="left:975px;top:317.2px;width:32px;height:10.3px;background:#ececec;border:1px solid #cfcfcf;border-radius:1px"></div>
<div class="t" style="left:980.5px;top:319.85px;font-size:6.4px;transform:scaleX(0.94);transform-origin:0 0;color:#555">Annuler</div>
<svg class="a" style="left:870px;top:140px" width="154" height="200">
 <g transform="translate(-870,-140)">
 <circle cx="890.5" cy="153.4" r="2.5" fill="#333"/>
 <rect x="889.1" y="153" width="2.8" height="0.8" fill="#fff"/>
 <path d="M1004.8 152 L1007.2 153.5 L1004.8 155 Z M1007.4 152 L1009.8 153.5 L1007.4 155 Z" fill="#333"/>
 <!-- type icon 1 -->
 <path d="M937 163.5 L938.5 162.3 L944.5 162.3 L944.5 172.2 L943 173.4 L937 173.4 Z" fill="#8cc8f0"/>
 <path d="M937 163.5 L943 163.5 L943 171.8 L937 171.8 Z" fill="#b6dcf6"/>
 <path d="M937 171.8 L943 171.8 L943 173.4 L937 173.4 Z" fill="#e9f4fb"/>
 <!-- type icon 2 -->
 <path d="M951.5 164 L953 162.6 L958 162.6 L958 171.5 L956.5 173 L951.5 173 Z" fill="#4c9fe0" stroke="#2d6fa8" stroke-width="0.4"/>
 <path d="M954 163 L954 172.5 M956 162.8 L956 172.3" stroke="#cde6f8" stroke-width="0.4"/>
 <path d="M959.8 163 L959.8 170.5" stroke="#333" stroke-width="0.6"/>
 <!-- cursor -->
 <path d="M938.3 180.3 L938.3 188.5 L940.2 186.8 L941.5 189.6 L942.5 189.2 L941.3 186.5 L943.6 186.3 Z" fill="#fff" stroke="#555" stroke-width="0.4"/>
 <path d="M986.9 182.9 L990.5 186.5 M990.5 182.9 L986.9 186.5" stroke="#333" stroke-width="0.9"/>
 <!-- start icon -->
 <path d="M938 196.5 L938 204.8" stroke="#1f3576" stroke-width="0.9"/>
 <path d="M938.5 200.7 L942.5 200.7" stroke="#333" stroke-width="0.5"/>
 <path d="M941.8 199.8 L943.5 200.7 L941.8 201.6 Z" fill="#333"/>
 <!-- direction icon -->
 <path d="M936.8 220.8 L941.5 215.5" stroke="#444" stroke-width="0.6"/>
 <path d="M936.2 221.4 L937.2 219.3 L938.3 220.5 Z" fill="#444"/>
 <path d="M939.8 213.5 L943.5 214 L941.5 216.8 Z" fill="#ec9a5a"/>
 <!-- extent icon -->
 <path d="M935.8 229.5 L935.8 237 M942 229.5 L942 237" stroke="#1f3576" stroke-width="0.9"/>
 <path d="M936.5 233.2 L941.3 233.2" stroke="#333" stroke-width="0.5"/>
 <!-- carets -->
 <g fill="#333">
  <path d="M989.8 199.6 L993 199.6 L991.4 201.8 Z"/>
  <path d="M989.8 216.0 L993 216.0 L991.4 218.2 Z"/>
  <path d="M989.8 232.1 L993 232.1 L991.4 234.3 Z"/>
  <path d="M989.8 286.2 L993 286.2 L991.4 288.4 Z"/>
 </g>
 <!-- couper icon -->
 <rect x="938.4" y="282.5" width="3.8" height="4.5" fill="#f2a0a8"/>
 <path d="M936.6 285.5 L936.6 290.8 L944.4 290.8 L944.4 285.5" fill="none" stroke="#3d92dc" stroke-width="1.2"/>
 <!-- objets triangle -->
 <path d="M887.3 302 L890 303.7 L887.3 305.4 Z" fill="#222"/>
 <!-- info -->
 <circle cx="892.8" cy="322.2" r="2.8" fill="#111"/>
 <rect x="892.4" y="321.5" width="0.9" height="2.3" fill="#fff"/>
 <circle cx="892.85" cy="320.3" r="0.5" fill="#fff"/>
 </g>
</svg>

</div>
</body></html>
